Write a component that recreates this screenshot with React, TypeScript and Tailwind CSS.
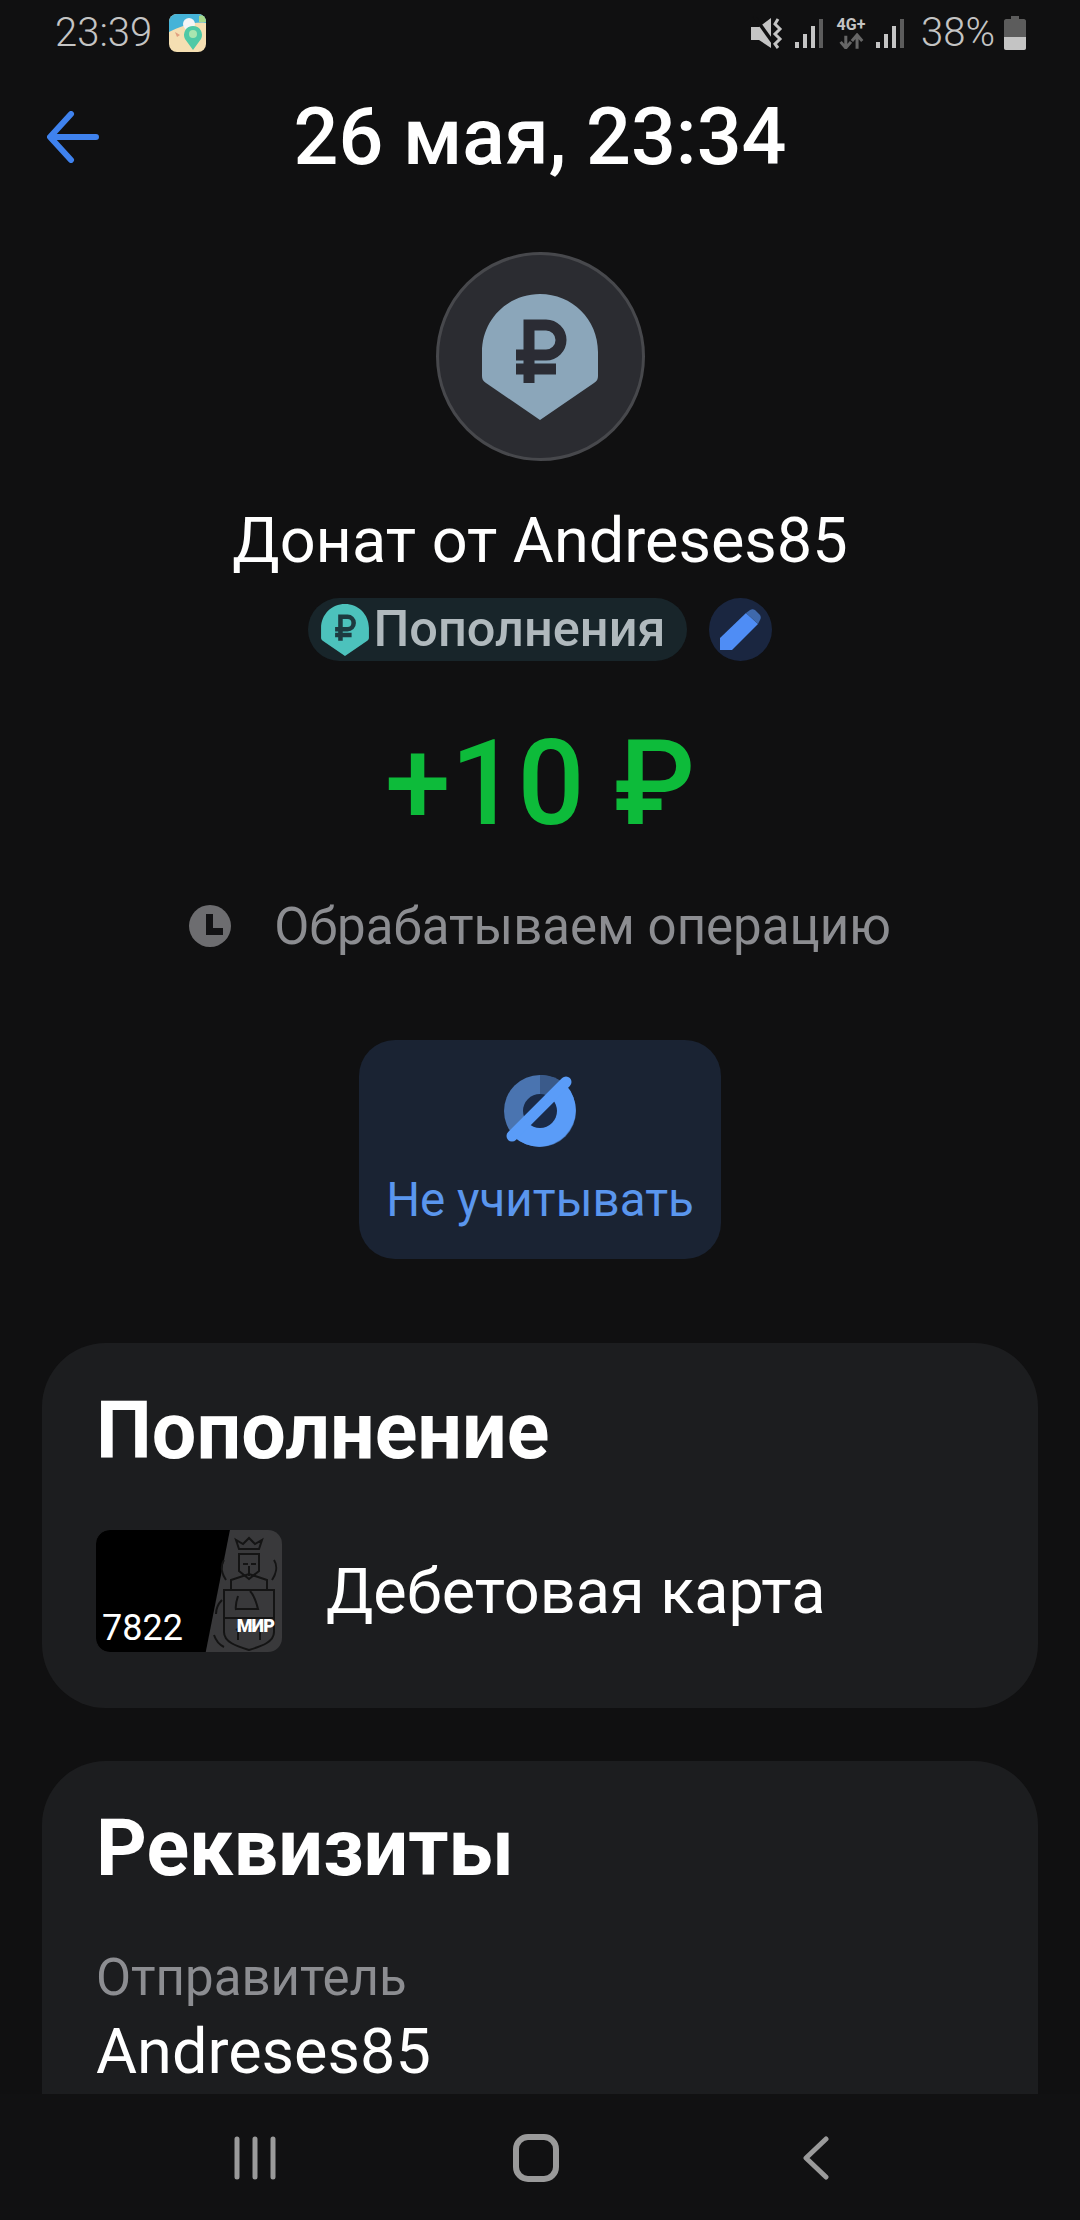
function RubleShield({ fill, stroke, className }: { fill: string; stroke: string; className: string }) {
  return (
    <svg viewBox="0 0 116 126" className={className}>
      <path d="M0 58C0 25 26 0 58 0s58 25 58 58v24c0 3-1 5-4 7L58 126 4 89c-3-2-4-4-4-7z" fill={fill} />
      <path d="M47 89V31h17a15 15 0 0 1 0 30H34M34 75h40" fill="none" stroke={stroke} strokeWidth="11" />
    </svg>
  );
}

function SignalBars({ className }: { className: string }) {
  return (
    <svg viewBox="0 0 28 34" className={`w-[28px] h-[34px] ${className}`}>
      <rect x="0" y="26" width="4" height="6" fill="#c4c4c4" />
      <rect x="8" y="18" width="4" height="14" fill="#c4c4c4" />
      <rect x="16" y="10" width="4" height="22" fill="#c4c4c4" />
      <rect x="24" y="3" width="4" height="29" fill="#5c5c5c" />
    </svg>
  );
}

function StatusIcons() {
  return (
    <div className="flex items-center">
      <svg viewBox="0 0 32 34" className="w-[32px] h-[34px]">
        <path d="M0 11h8l12-9v30L8 24H0z" fill="#c4c4c4" />
        <path d="M3 0l20 28" stroke="#101011" strokeWidth="3.5" />
        <path d="M27 3l-3 5 5 5-5 5 5 5-5 5 3 4" fill="none" stroke="#c4c4c4" strokeWidth="3" />
      </svg>
      <SignalBars className="ml-[12px]" />
      <div className="flex flex-col items-center w-[32px] ml-[12px]">
        <span className="text-[16px] leading-[16px] font-bold text-[#c4c4c4]">4G+</span>
        <svg viewBox="0 0 30 18" className="w-[26px] h-[16px]">
          <path d="M9 17V3M3 10l6 7 6-7" fill="none" stroke="#666" strokeWidth="3.5" />
          <path d="M22 18V3M16 9l6-7 6 7" fill="none" stroke="#666" strokeWidth="3.5" />
        </svg>
      </div>
      <SignalBars className="ml-[9px]" />
      <span className="text-[40px] leading-none font-light text-[#c4c4c4] ml-[17px] w-[72px] whitespace-nowrap">38%</span>
      <svg viewBox="0 0 22 34" className="w-[22px] h-[34px] ml-[11px]">
        <path d="M7 0h8v3h5c1 0 2 1 2 2v27c0 1-1 2-2 2H2c-1 0-2-1-2-2V5c0-1 1-2 2-2h5z" fill="#5c5c5c" />
        <path d="M0 21h22v11c0 1-1 2-2 2H2c-1 0-2-1-2-2z" fill="#c4c4c4" />
      </svg>
    </div>
  );
}

function BankCard() {
  return (
    <div className="relative w-[186px] h-[122px] rounded-[14px] overflow-hidden bg-[#39393b] shrink-0">
      <div className="absolute inset-0 bg-black [clip-path:polygon(0_0,72%_0,59%_100%,0_100%)]" />
      <svg viewBox="0 0 186 122" className="absolute inset-0">
        <g fill="none" stroke="#141414" strokeWidth="2">
          <path d="M143 19l-3-9 7 4 6-6 6 6 7-4-3 9z" />
          <path d="M143 24h20v17l-10 8-10-8z" />
          <path d="M147 34h5M155 34h5M153 36v10" />
          <path d="M135 60v-10l18-6 18 6v10" />
          <path d="M128 60h50v42c0 10-12 14-25 18-13-4-25-8-25-18z" />
          <path d="M128 88h50" />
          <path d="M142 66c-2 6-3 9-2 14M140 79h22c-2-8-4-14-8-18" />
          <path d="M140 100c6-4 20-4 26 0M142 100v10M164 100v10" />
          <path d="M128 30c-4 6-2 14 2 20M178 30c4 6 2 14-2 20M118 105c2 6 6 10 10 12M126 70c-4 4-6 8-6 14" />
        </g>
      </svg>
      <span className="absolute left-[6px] bottom-[6px] text-[36px] leading-[36px] text-white">7822</span>
      <span className="absolute right-[8px] bottom-[17px] text-[18px] leading-[18px] font-black text-white tracking-tighter">МИР</span>
    </div>
  );
}

export default function App() {
  return (
    <div className="flex flex-col h-[2220px] overflow-hidden bg-[#101011] font-['Roboto',sans-serif] text-white">
      <div className="flex items-center justify-between h-[66px] pl-[55px] pr-[54px] shrink-0">
        <div className="flex items-center gap-[17px]">
          <span className="text-[40px] leading-none font-light text-[#c4c4c4]">23:39</span>
          <svg viewBox="0 0 37 38" className="w-[37px] h-[38px]">
            <defs>
              <clipPath id="app-clip">
                <rect width="37" height="38" rx="8" />
              </clipPath>
            </defs>
            <g clipPath="url(#app-clip)">
              <rect width="37" height="38" fill="#f5dfb2" />
              <path d="M0 0h37v9c-12-2-26 4-37 9z" fill="#45b3d8" />
              <path d="M30 2a5 5 0 0 1 7 2v4h-7z" fill="#a6d98c" />
              <circle cx="20" cy="10" r="6" fill="#f5f5f5" />
              <path d="M6 18l5 3-3 2z" fill="#e0a080" />
              <path d="M24 36l-8-11a9 9 0 1 1 16 0z" fill="#4fc9a6" />
              <circle cx="24" cy="20" r="4" fill="#a9e6b0" />
            </g>
          </svg>
        </div>
        <StatusIcons />
      </div>

      <div className="relative flex items-center justify-center h-[142px] shrink-0">
        <svg viewBox="0 0 52 52" className="absolute left-[47px] top-[45px] w-[52px] h-[52px]" fill="none" stroke="#3f82ee" strokeWidth="6" strokeLinecap="round" strokeLinejoin="round">
          <path d="M49 26H4M24 3L3 26l21 23" />
        </svg>
        <h1 className="text-[79px] leading-none font-medium">26 мая, 23:34</h1>
      </div>

      <div className="flex-1 min-h-0 overflow-hidden flex flex-col items-center">
        <div className="mt-[44px] w-[209px] h-[209px] rounded-full bg-[#2b2c31] border-[3px] border-[#47484c] flex items-center justify-center shrink-0">
          <RubleShield fill="#8ba6ba" stroke="#2b2c34" className="w-[116px] h-[126px]" />
        </div>

        <p className="mt-[40px] text-[63px] leading-[80px] shrink-0">Донат от Andreses85</p>

        <div className="mt-[17px] flex items-center gap-[22px] shrink-0">
          <div className="flex items-center h-[63px] pl-[13px] pr-[21px] rounded-full bg-[#18252a]">
            <RubleShield fill="#4cc2bc" stroke="#1d3a40" className="w-[48px] h-[52px]" />
            <span className="text-[50.5px] leading-none font-medium text-[#b0b9bd] ml-[4px]">Пополнения</span>
          </div>
          <div className="w-[63px] h-[63px] rounded-full bg-[#1a2640] flex items-center justify-center">
            <svg viewBox="0 0 42 42" className="w-[42px] h-[42px]">
              <path d="M1 41V29L27 4l12 11-26 26z" fill="#4f8df5" />
              <path d="M27 4l4-3c2-1 3-1 5 0l5 5c1 2 1 3 0 5l-2 4z" fill="#3f69ac" />
            </svg>
          </div>
        </div>

        <p className="mt-[63px] text-[118px] leading-[120px] font-medium text-[#0dbb3a] shrink-0">+10 ₽</p>

        <div className="mt-[52px] flex items-center h-[60px] gap-[43px] shrink-0">
          <svg viewBox="0 0 42 42" className="w-[42px] h-[42px]">
            <circle cx="21" cy="21" r="21" fill="#6d6d70" />
            <path d="M17 9h7v14h10v7H17z" fill="#121214" />
          </svg>
          <span className="text-[51px] leading-none text-[#8c8d91]">Обрабатываем операцию</span>
        </div>

        <div className="mt-[84px] w-[362px] h-[219px] rounded-[36px] bg-[#1a2333] flex flex-col items-center shrink-0">
          <svg viewBox="0 0 74 74" className="mt-[34px] w-[74px] h-[74px]">
            <circle cx="37" cy="37" r="36" fill="#4a74b0" />
            <path d="M37 1a36 36 0 0 1 26 10L37 37z" fill="#3a5a8a" />
            <path d="M11 63A36.8 36.8 0 0 0 63 11z" fill="#5a9cf8" />
            <circle cx="37" cy="37" r="17" fill="#1a2a47" />
            <path d="M9 62L63 8" stroke="#5a9cf8" strokeWidth="11" strokeLinecap="round" />
          </svg>
          <span className="mt-[24px] text-[47.5px] leading-[56px] text-[#5a96ee]">Не учитывать</span>
        </div>

        <div className="mt-[84px] w-[996px] h-[365px] rounded-[64px] bg-[#1c1d1f] px-[54px] pt-[44px] shrink-0">
          <h2 className="text-[79px] leading-[88px] font-bold">Пополнение</h2>
          <div className="mt-[55px] flex items-center gap-[44px]">
            <BankCard />
            <span className="text-[63px] leading-none">Дебетовая карта</span>
          </div>
        </div>

        <div className="mt-[53px] w-[996px] flex-1 rounded-t-[64px] bg-[#1c1d1f] px-[54px] pt-[43px]">
          <h2 className="text-[79px] leading-[88px] font-bold">Реквизиты</h2>
          <p className="mt-[56px] text-[51px] leading-[60px] text-[#8c8d91]">Отправитель</p>
          <p className="mt-[6px] text-[63px] leading-[76px]">Andreses85</p>
        </div>
      </div>

      <div className="flex items-center h-[126px] bg-[#111112] shrink-0 relative">
        <svg viewBox="0 0 42 44" className="absolute left-[234px] top-[42px] w-[42px] h-[44px]" stroke="#9a9a9a" strokeWidth="5" strokeLinecap="round">
          <path d="M3 3v38M21 3v38M39 3v38" />
        </svg>
        <svg viewBox="0 0 46 48" className="absolute left-[513px] top-[40px] w-[46px] h-[48px]" fill="none" stroke="#9a9a9a" strokeWidth="6">
          <rect x="3" y="3" width="40" height="42" rx="12" />
        </svg>
        <svg viewBox="0 0 26 44" className="absolute left-[803px] top-[42px] w-[26px] h-[44px]" fill="none" stroke="#9a9a9a" strokeWidth="5" strokeLinecap="round" strokeLinejoin="round">
          <path d="M23 3L3 22l20 19" />
        </svg>
      </div>
    </div>
  );
}
